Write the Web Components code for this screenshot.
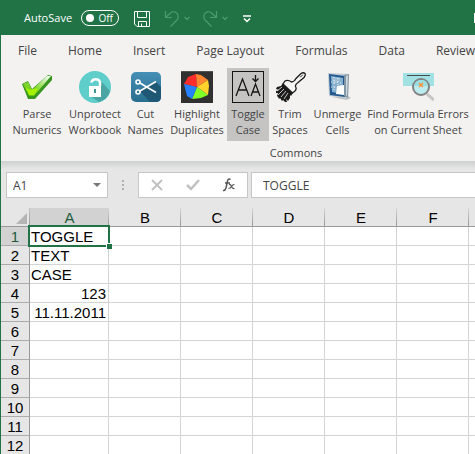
<!DOCTYPE html>
<html lang="en">
<head>
<meta charset="utf-8">
<title>Spreadsheet</title>
<style>
html, body { margin: 0; height: 100%; overflow: hidden; }
body { font-family: "Open Sans", "Noto Sans", sans-serif; color: #444; }
</style>
</head>
<body>
<sheet-app></sheet-app>

<script>
const define = (name, html, setup) => {
  const template = document.createElement('template');
  template.innerHTML = html;
  customElements.define(name, class extends HTMLElement {
    constructor() {
      super();
      this.attachShadow({ mode: 'open' }).append(template.content.cloneNode(true));
    }
    connectedCallback() { if (setup) setup(this, this.shadowRoot); }
  });
};

define('title-bar', `
<style>
:host { display: flex; align-items: center; height: 35px; padding-left: 24px; background: #217346; color: #fff; font-size: 11px; overflow: hidden; }
label { display: flex; align-items: center; gap: 9px; }
.pill { display: flex; align-items: center; justify-content: space-between; box-sizing: border-box; width: 38px; height: 16px; padding: 0 5px 0 4px; border: 1px solid #fff; border-radius: 8px; font-size: 10px; }
input { appearance: none; width: 8px; height: 8px; margin: 0; border-radius: 50%; background: #fff; }
button { display: flex; padding: 0; border: 0; background: none; color: inherit; }
.save { margin-left: 15px; padding-top: 2px; }
.undo { margin-left: 13px; padding-top: 2px; }
.redo { margin-left: 10px; padding-top: 2px; }
.more { margin-left: 14px; padding-top: 2px; }
button:disabled { color: #4e9a6d; }
svg { fill: none; stroke: currentColor; }
.edge { width: 1px; height: 10px; margin-left: auto; background: #fff; }
</style>
<label>AutoSave <span class="pill"><input type="checkbox" role="switch">Off</span></label>
<button class="save" aria-label="Save"><svg width="17" height="18" viewBox="0 0 17 18"><path d="M.5 1.500H15.500V16.500H3L.5 14ZM3.500 1.500V7.500H12.500V1.500M4.500 16.500V11.500H12.500V16.500M7.500 16V13.500"/></svg></button>
<button class="undo" aria-label="Undo" disabled><svg width="28" height="18" viewBox="0 0 28 18"><path stroke-width="1.200" d="M1.500 1V7.500H8M1.500 7.500L6.500 3C9 1 12 1.500 13.500 4C15 7 14 9 12.500 10.500L6.500 16.500M20.500 7L23 9.500L25.500 7"/></svg></button>
<button class="redo" aria-label="Redo" disabled><svg width="27" height="18" viewBox="0 0 27 18"><path stroke-width="1.200" d="M14.500 1V7.500H8M14.500 7.500L9.500 3C7 1 4 1.500 2.500 4C1 7 2 9 3.500 10.500L9.500 16.500M20.500 7L23 9.500L25.500 7"/></svg></button>
<button class="more" aria-label="Customize toolbar"><svg width="8" height="8" viewBox="0 0 8 8"><path d="M0 1H8M1 3.500L4 6.500L7 3.500" stroke-width="1.500"/></svg></button>
<span class="edge"></span>
`);

define('ribbon-tabs', `
<style>
:host { display: block; overflow: hidden; }
nav { display: flex; gap: 31px; padding: 7px 0 0 17px; font-size: 12px; line-height: 18px; white-space: nowrap; }
a { color: #444; text-decoration: none; flex: none; }
</style>
<nav></nav>
`, (el, root) => {
  root.querySelector('nav').innerHTML = el.getAttribute('items').split(',')
    .map(t => `<a href="#">${t}</a>`).join('');
});

define('ribbon-button', `
<style>
:host { display: block; }
button { display: flex; flex-direction: column; align-items: center; width: 100%; height: 73px; margin: 0; padding: 3px 0 0; border: 0; background: none; font: inherit; font-size: 11px; line-height: 16px; color: #444; white-space: nowrap; overflow: visible; }
:host([active]) button { background: #c5c4c3; }
.icon { display: flex; height: 35px; }
</style>
<button><span class="icon"><slot name="icon"></slot></span><slot></slot></button>
`);

define('command-ribbon', `
<style>
:host { display: block; background: #f3f2f1; height: 126px; overflow: hidden; }
.tools { display: grid; grid-template-columns: 58px 58px 43px 60px 42px 42px 53px 108px; padding: 8px 0 0 7px; }
.group { padding-top: 4px; width: 590px; text-align: center; font-size: 11px; line-height: 16px; }
svg { display: block; }
</style>
<ribbon-tabs items="File,Home,Insert,Page Layout,Formulas,Data,Review"></ribbon-tabs>
<div class="tools">
<ribbon-button><svg slot="icon" width="32" height="32" viewBox="0 0 32 32">
  <defs><linearGradient id="g" x1="0" y1="1" x2=".8" y2="0"><stop offset="0" stop-color="#52b800"/><stop offset=".5" stop-color="#87dc35"/><stop offset="1" stop-color="#eaf8e6"/></linearGradient></defs>
  <path d="M1 13L7 10L11 18L27 4L31 5V9L14 28H7Z" fill="#38951e"/>
  <path d="M2 13L7 11L11 19L26 5L30 5L13 25H8Z" fill="url(#g)"/>
  <path d="M4 15C9 22 13 16 17 18L13 24H8Z" fill="#a5f100"/></svg>Parse<br>Numerics</ribbon-button>
<ribbon-button><svg slot="icon" width="32" height="32" viewBox="0 0 32 32">
  <circle cx="16" cy="16" r="16" fill="#5fcdca"/><path d="M21 9L31 20A16 16 0 0 1 20 31L11 25L22 14Z" fill="#4ba5a3"/>
  <path d="M12.500 11.500V11A4.500 4 0 0 1 21 11V15" fill="none" stroke="#fff" stroke-width="2.500"/>
  <rect x="10" y="15" width="12" height="11" fill="#fff"/><rect x="15" y="18" width="2" height="4" fill="#409492"/></svg>Unprotect<br>Workbook</ribbon-button>
<ribbon-button><svg slot="icon" width="32" height="32" viewBox="0 0 32 32">
  <defs><linearGradient id="b" x2="0" y2="1"><stop stop-color="#468fb6"/><stop offset="1" stop-color="#286e8e"/></linearGradient></defs>
  <rect x="1" y="1" width="30" height="30" rx="5" fill="url(#b)"/><path d="M10 20L25 10L31 16V26Q31 31 26 31H20Z" fill="#1e5875"/>
  <g fill="none" stroke="#fff" stroke-width="1.600"><circle cx="8" cy="11" r="2"/><circle cx="8" cy="21" r="2"/><path d="M10 12L26 21.500M10 20L26 10.500"/></g></svg>Cut<br>Names</ribbon-button>
<ribbon-button><svg slot="icon" width="32" height="32" viewBox="0 0 32 32">
  <path fill="#303030" d="M0 0H32V32H0Z"/><path fill="#50534d" d="M0 0H32V1H0Z"/>
  <path fill="#ff2c2c" d="M16 16L3 13L7 6L15 3Z"/><path fill="#ff8530" d="M16 16L15 3L20 4L27 9Z"/>
  <path fill="#ffd22c" d="M16 16L27 9L28 15L27 24Z"/><path fill="#80ff29" d="M16 16L27 24L20 27L11 28Z"/>
  <path fill="#2681ff" d="M16 16L11 28L6 25L3 13Z"/></svg>Highlight<br>Duplicates</ribbon-button>
<ribbon-button active><svg slot="icon" width="32" height="32" viewBox="0 0 32 32" fill="none" stroke="#151515">
  <rect x=".5" y=".5" width="31" height="31"/><path stroke-width="1.300" d="M4 25L10.500 8L17 25M6 19H15M19 25L23.500 13L28 25M20.500 21H26.500M23.500 4V10M20.500 7.500L23.500 10.500L26.500 7.500"/></svg>Toggle<br>Case</ribbon-button>
<ribbon-button><svg slot="icon" width="32" height="32" viewBox="0 0 32 32">
  <path fill="#1b1b1b" d="M9 12L19 22L17 25L16 24V27L14 30L12 28L13 31H11L9 29L8 30L6 27L5 28L4 26L3 25L4 22H2V20L5 19L2 18L3 16L7 15Z"/>
  <path stroke="#f3f2f1" stroke-width=".8" d="M8 16L3 20M10 18L4 24M12 20L7 26M14 22L10 28"/>
  <path fill="#f6f6f5" stroke="#1b1b1b" stroke-width="1.300" d="M9 13L11 10Q14 8.500 17.500 11Q20 11 22 7.500L27 2.500Q29.500 1 31 2.500Q32 4 30 6.500L24 11.500Q21 13.500 21.500 15.500Q23 18 21 20L18.500 22Z"/>
  <path stroke="#1b1b1b" stroke-linecap="round" d="M26.500 6L28.500 4"/></svg>Trim<br>Spaces</ribbon-button>
<ribbon-button><svg slot="icon" width="32" height="32" viewBox="0 0 32 32">
  <path fill="#c0c4c6" d="M10 26L26 25L29 27L25 29L19 28Z"/>
  <path fill="#bfcbd1" d="M6 2L27 3L26 27L7 25Z"/><path fill="#245990" d="M7 3L23 5V26L8 24Z"/>
  <path fill="#86b0cf" d="M9 5L21 7V23L10 21Z"/><path fill="#9dbfd6" d="M10 6L19 7L17 11L11 13Z"/>
  <path stroke="#e9f1f5" stroke-dasharray="1 2" d="M12 6V21M16 7V22M9 11L20 12M9 16L20 17"/>
  <path fill="#fff" d="M15 15L22 14V24L14 23Z"/><path fill="#8297a5" d="M22 4L27 3L26 27L22 25Z"/>
  <path fill="#d2d9dd" d="M24 5L26 4L25 25L24 24Z"/></svg>Unmerge<br>Cells</ribbon-button>
<ribbon-button><svg slot="icon" width="32" height="32" viewBox="0 0 32 32">
  <path fill="#a1e1e3" d="M1 2H32V15H1Z"/><path stroke="#464d50" d="M5 4.500H28"/>
  <path stroke="#c7c7c7" stroke-width="3" d="M25 23L32 29"/><circle cx="19" cy="16" r="8" fill="#bdecef" stroke="#818181" stroke-width="2"/>
  <path fill="#99dfe2" d="M12 15H26Q25 8 19 9Q13 9 12 15Z"/><path stroke="#ff9138" stroke-width="1.500" d="M17 12L21 16M21 12L17 16"/></svg>Find Formula Errors<br>on Current Sheet</ribbon-button>
</div>
<div class="group">Commons</div>
`);

define('formula-bar', `
<style>
:host { display: flex; align-items: flex-start; box-sizing: border-box; height: 47px; padding: 11px 0 0 5px; background: linear-gradient(#cecfcf, #e6e6e6 8px); overflow: hidden; }
.box { display: flex; align-items: center; box-sizing: border-box; height: 26px; border: 1px solid #c6c6c6; background: #fff; }
.name { width: 102px; justify-content: space-between; padding-right: 6px; }
input { box-sizing: border-box; min-width: 0; height: 24px; padding: 0; border: 0; background: none; outline: 0; font: inherit; font-size: 12px; color: #444; }
.name input { width: 70px; padding-left: 6px; }
button { display: flex; padding: 0; border: 0; background: none; }
.dots { display: grid; gap: 2px; margin: 8px 14px 0; }
.dots i { width: 2px; height: 2px; background: #b0b0b0; }
.tools { width: 110px; justify-content: space-between; padding: 0 12px; }
.value { flex: 1; margin: 0 -1px 0 3px; }
.value input { width: 100%; padding-left: 11px; }
</style>
<div class="box name"><input aria-label="Name box" value="A1"><button aria-label="Open names"><svg width="8" height="4"><path d="M0 0H8L4 4Z" fill="#777"/></svg></button></div>
<span class="dots"><i></i><i></i><i></i></span>
<div class="box tools">
<button aria-label="Cancel"><svg width="12" height="12" viewBox="0 0 12 12"><path d="M1 1L11 11M11 1L1 11" stroke="#c1c1c1" stroke-width="2"/></svg></button>
<button aria-label="Enter"><svg width="14" height="12" viewBox="0 0 14 12"><path d="M1 6L5 10L13 1" fill="none" stroke="#c1c1c1" stroke-width="2.500"/></svg></button>
<button aria-label="Insert function"><svg width="12" height="14" viewBox="0 0 12 14" fill="none" stroke="#555"><path stroke-width="1.500" d="M0 12.500Q2 13 3 10L4.500 3Q5 0 7.500 1.500M2 5H7"/><path stroke-width="1.200" d="M6 6.500Q7.500 6 8.500 8.500T11.500 10.500M11.500 6.500Q9.500 6.500 8.500 8.500T5.500 10.500"/></svg></button>
</div>
<div class="box value"><input aria-label="Formula" value="TOGGLE"></div>
`);

define('sheet-grid', `
<style>
:host { display: block; background: #fff; overflow: hidden; font-family: "Liberation Sans", Arial, sans-serif; color: #000; }
table { table-layout: fixed; width: 540px; border-collapse: separate; border-spacing: 0; font-size: 15px; line-height: 17px; }
th, td { box-sizing: border-box; height: 19px; padding: 1px 2px 0 1px; border: 0 solid #d4d4d4; border-width: 0 1px 1px 0; text-align: left; white-space: nowrap; font-weight: 400; }
th { padding: 1px 0 0; border-color: #ababab; background: #e6e6e6; text-align: center; }
thead th { border-bottom-color: #999; border-right: 0; background: linear-gradient(#d4d4d4, #999) right / 1px 100% no-repeat #e6e6e6; }
thead th.corner { background: linear-gradient(#c4c4c4, #999) right / 1px 100% no-repeat #e6e6e6; }
tbody th { border-right-color: #999; }
th.on { color: #1e5c3c; background-color: #d2d2d2; }
td.num { text-align: right; }
.corner svg { display: block; margin: 2px 3px 0 auto; }
.sel { position: relative; }
.sel::before { content: ""; position: absolute; inset: -2px; border: 2px solid #217346; pointer-events: none; }
.sel::after { content: ""; position: absolute; right: -4px; bottom: -4px; width: 5px; height: 5px; border: 1px solid #fff; border-width: 1px 0 0 1px; background: #217346; }
.c0 { width: 29px; } .c1 { width: 79px; } .c { width: 72px; }
</style>
<table><colgroup><col class="c0"><col class="c1"></colgroup><thead></thead><tbody></tbody></table>
`, (el, root) => {
  const letters = ['A', 'B', 'C', 'D', 'E', 'F', ''];
  const values = ['TOGGLE', 'TEXT', 'CASE', '123', '11.11.2011'];
  root.querySelector('colgroup').innerHTML += '<col class="c">'.repeat(6);
  root.querySelector('thead').innerHTML = '<tr><th class="corner" aria-label="Select all"><svg width="11" height="11"><path d="M11 0V11H0Z" fill="#b4b4b4"/></svg></th>'
    + letters.map((c, i) => `<th scope="col"${i ? '' : ' class="on"'}>${c}</th>`).join('') + '</tr>';
  root.querySelector('tbody').innerHTML = Array.from({ length: 12 }, (_, r) =>
    `<tr><th scope="row"${r ? '' : ' class="on"'}>${r + 1}</th><td class="${r ? r > 2 ? 'num' : '' : 'sel'}">${values[r] || ''}</td>` + '<td></td>'.repeat(6) + '</tr>').join('');
});

define('sheet-app', `
<style>
:host { display: grid; grid-template-columns: minmax(0, 1fr); grid-template-rows: auto auto auto 1fr; height: 100vh; overflow: hidden; }
command-ribbon, formula-bar, sheet-grid { border-left: 1px solid #217346; }
</style>
<title-bar></title-bar>
<command-ribbon></command-ribbon>
<formula-bar></formula-bar>
<sheet-grid></sheet-grid>
`);
</script>
</body>
</html>
